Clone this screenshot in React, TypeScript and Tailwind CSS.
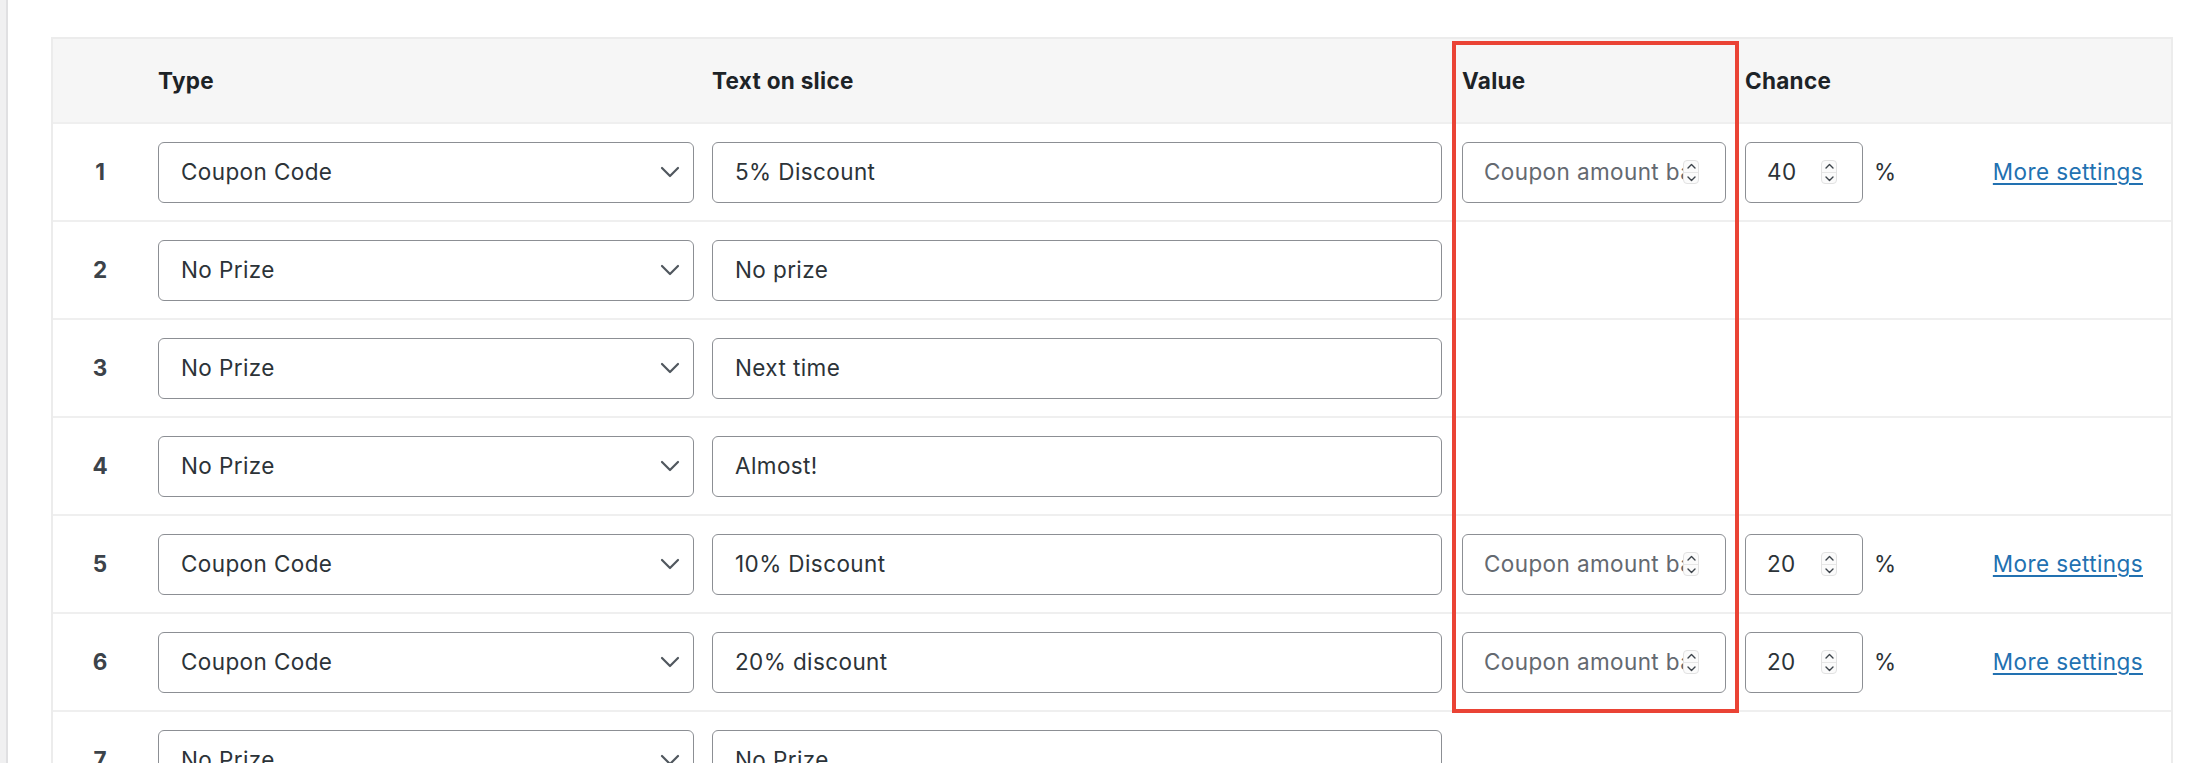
import React from "react";

type Row = { n: number; type: string; text: string; coupon?: string };

const rows: Row[] = [
  { n: 1, type: "Coupon Code", text: "5% Discount", coupon: "40" },
  { n: 2, type: "No Prize", text: "No prize" },
  { n: 3, type: "No Prize", text: "Next time" },
  { n: 4, type: "No Prize", text: "Almost!" },
  { n: 5, type: "Coupon Code", text: "10% Discount", coupon: "20" },
  { n: 6, type: "Coupon Code", text: "20% discount", coupon: "20" },
  { n: 7, type: "No Prize", text: "No Prize" },
];

function Spinner() {
  return (
    <div className="flex h-[24px] w-[16px] shrink-0 flex-col items-center justify-center rounded-[4px] border border-[#e2e2e2] bg-[#fbfbfb]">
      <svg width="9" height="6" viewBox="0 0 9 6" className="mb-[3px]">
        <path d="M1 5 L4.5 1.5 L8 5" fill="none" stroke="#3c434a" strokeWidth="1.4" strokeLinecap="round" strokeLinejoin="round" />
      </svg>
      <div className="h-px w-full bg-[#e6e6e6]" />
      <svg width="9" height="6" viewBox="0 0 9 6" className="mt-[3px]">
        <path d="M1 1 L4.5 4.5 L8 1" fill="none" stroke="#3c434a" strokeWidth="1.4" strokeLinecap="round" strokeLinejoin="round" />
      </svg>
    </div>
  );
}

const box =
  "flex h-[61px] items-center rounded-[6px] border-[1.5px] border-[#8c8f94] bg-white text-[22.5px] tracking-[0.4px] text-[#2c3338]";

export default function App() {
  return (
    <div
      className="relative flex min-h-[900px] w-[2200px] bg-white"
      style={{ fontFamily: "Inter, 'Liberation Sans', sans-serif" }}
    >
      <div className="w-[8px] shrink-0 border-r-[2px] border-[#e0e0e2] bg-[#f0f0f1]" />
      <div className="pl-[43px] pt-[37px]">
        <div className="w-[2122px] border-2 border-[#ececec]">
          {/* header */}
          <div className="flex h-[83px] items-center bg-[#f6f6f6] text-[22.5px] font-bold tracking-[0.3px] text-[#1d2327]">
            <div className="w-[105px]" />
            <div className="w-[554px]">Type</div>
            <div className="w-[750px]">Text on slice</div>
            <div className="w-[283px]">Value</div>
            <div className="flex-1">Chance</div>
          </div>
          {rows.map((r) => (
            <div key={r.n} className="flex h-[98px] items-center border-t-2 border-[#efefef]">
              <div className="w-[105px] pr-[11px] text-center text-[22.5px] font-bold text-[#3c434a]">{r.n}</div>
              <div className="w-[554px]">
                <div className={`${box} w-[536px] justify-between pl-[22px] pr-[13px]`}>
                  <span>{r.type}</span>
                  <svg width="20" height="12" viewBox="0 0 20 12">
                    <path d="M2 2 L10 10 L18 2" fill="none" stroke="#50575e" strokeWidth="2.2" strokeLinecap="round" strokeLinejoin="round" />
                  </svg>
                </div>
              </div>
              <div className="w-[750px]">
                <div className={`${box} w-[730px] pl-[22px]`}>{r.text}</div>
              </div>
              <div className="w-[283px]">
                {r.coupon && (
                  <div className={`${box} w-[264px] pl-[21px] pr-[26px]`}>
                    <span className="min-w-0 flex-1 overflow-hidden whitespace-nowrap text-[#646970]">
                      Coupon amount based on
                    </span>
                    <Spinner />
                  </div>
                )}
              </div>
              {r.coupon && (
                <div className="flex flex-1 items-center">
                  <div className={`${box} w-[118px] justify-between pl-[21px] pr-[25px]`}>
                    <span>{r.coupon}</span>
                    <Spinner />
                  </div>
                  <span className="ml-[11px] text-[22.5px] text-[#2c3338]">%</span>
                  <a href="#" className="ml-auto mr-[28px] text-[22.5px] tracking-[0.4px] text-[#2271b1] underline underline-offset-[3px]">
                    More settings
                  </a>
                </div>
              )}
            </div>
          ))}
        </div>
      </div>
      <div className="pointer-events-none absolute left-[1452px] top-[41px] h-[672px] w-[287px] border-4 border-[#ea4335]" />
    </div>
  );
}
